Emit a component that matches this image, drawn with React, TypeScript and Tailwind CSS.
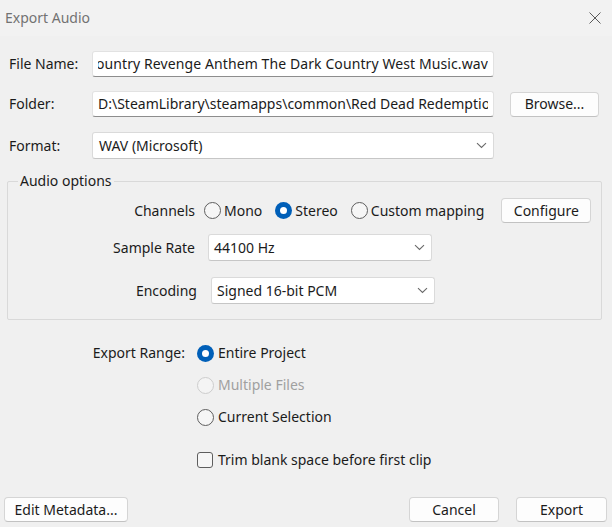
import React from "react";

function Chevron() {
  return (
    <svg width="11" height="7" viewBox="0 0 11 7" className="shrink-0">
      <path d="M1 1.2 L5.5 5.5 L10 1.2" fill="none" stroke="#6a6a6a" strokeWidth="1.1" />
    </svg>
  );
}

function Radio({ checked, disabled }: { checked?: boolean; disabled?: boolean }) {
  if (checked) {
    return (
      <span className="w-[17px] h-[17px] rounded-full bg-[#005fb8] flex items-center justify-center shrink-0">
        <span className="w-[7px] h-[7px] rounded-full bg-white" />
      </span>
    );
  }
  if (disabled) {
    return <span className="w-[17px] h-[17px] rounded-full border border-[#cdcdcd] bg-[#f4f4f4] shrink-0" />;
  }
  return <span className="w-[17px] h-[17px] rounded-full border border-[#5e5e5e] bg-[#f6f6f6] shrink-0" />;
}

function Button({ label, className }: { label: string; className: string }) {
  return (
    <div
      className={
        "h-[25px] flex items-center justify-center bg-[#fdfdfd] border border-[#d5d5d5] border-b-[#c2c2c2] rounded-[4px] text-[#1b1b1b] " +
        className
      }
    >
      {label}
    </div>
  );
}

export default function App() {
  return (
    <div className="w-[612px] h-[527px] bg-[#f0f0f0] font-['Noto_Sans',sans-serif] text-[14px] leading-[20px] text-[#1b1b1b] overflow-hidden flex flex-col">
      {/* Title bar */}
      <div className="h-[36px] shrink-0 flex items-center justify-between pl-[5px] pr-[11px] bg-[#f2f2f2]">
        <span className="text-[#727272] text-[14px]">Export Audio</span>
        <svg width="12" height="12" viewBox="0 0 12 12">
          <path d="M0.5 0.5 L11.5 11.5 M11.5 0.5 L0.5 11.5" stroke="#5a5a5a" strokeWidth="1" />
        </svg>
      </div>

      {/* File Name */}
      <div className="flex items-center h-[26px] mt-[15px] pl-[9px]">
        <span className="w-[83px] shrink-0">File Name:</span>
        <div className="w-[402px] h-[26px] bg-white border border-[#e2e2e2] border-b-[#8d8d8d] rounded-[3px] px-[5px] flex items-center">
          <div className="flex-1 overflow-hidden flex justify-end">
            <span className="whitespace-nowrap tracking-[0.1px]">Country Revenge Anthem The Dark Country West Music.wav</span>
          </div>
        </div>
      </div>

      {/* Folder */}
      <div className="flex items-center h-[26px] mt-[14px] pl-[9px]">
        <span className="w-[83px] shrink-0">Folder:</span>
        <div className="w-[402px] h-[26px] bg-white border border-[#e2e2e2] border-b-[#8d8d8d] rounded-[3px] px-[5px] flex items-center">
          <div className="flex-1 overflow-hidden flex justify-start">
            <span className="whitespace-nowrap">D:\SteamLibrary\steamapps\common\Red Dead Redemption 2</span>
          </div>
        </div>
        <Button label="Browse..." className="ml-[16px] w-[89px]" />
      </div>

      {/* Format */}
      <div className="flex items-center h-[27px] mt-[15px] pl-[9px]">
        <span className="w-[83px] shrink-0">Format:</span>
        <div className="w-[402px] h-[27px] bg-white border border-[#dadada] border-b-[#c6c6c6] rounded-[3px] pl-[6px] pr-[6px] flex items-center justify-between">
          <span>WAV (Microsoft)</span>
          <Chevron />
        </div>
      </div>

      {/* Audio options group */}
      <div className="relative ml-[7px] mt-[22px] w-[595px] h-[139px] border border-[#d9d9d9] rounded-[2px] flex flex-col">
        <span className="absolute -top-[11px] left-[10px] px-[2px] bg-[#f0f0f0] leading-[20px]">Audio options</span>

        {/* Channels */}
        <div className="flex items-center h-[25px] mt-[16px]">
          <span className="w-[187px] text-right shrink-0">Channels</span>
          <div className="flex items-center ml-[9px]">
            <Radio />
            <span className="ml-[3px]">Mono</span>
          </div>
          <div className="flex items-center ml-[13px]">
            <Radio checked />
            <span className="ml-[3px]">Stereo</span>
          </div>
          <div className="flex items-center ml-[13px]">
            <Radio />
            <span className="ml-[3px]">Custom mapping</span>
          </div>
          <Button label="Configure" className="ml-[17px] w-[90px]" />
        </div>

        {/* Sample Rate */}
        <div className="flex items-center h-[27px] mt-[11px]">
          <span className="w-[187px] text-right shrink-0">Sample Rate</span>
          <div className="ml-[13px] w-[224px] h-[27px] bg-white border border-[#dadada] border-b-[#c6c6c6] rounded-[3px] pl-[5px] pr-[6px] flex items-center justify-between">
            <span>44100 Hz</span>
            <Chevron />
          </div>
        </div>

        {/* Encoding */}
        <div className="flex items-center h-[27px] mt-[16px]">
          <span className="w-[189px] text-right shrink-0">Encoding</span>
          <div className="ml-[14px] w-[224px] h-[27px] bg-white border border-[#dadada] border-b-[#c6c6c6] rounded-[3px] pl-[5px] pr-[6px] flex items-center justify-between">
            <span>Signed 16-bit PCM</span>
            <Chevron />
          </div>
        </div>
      </div>

      {/* Export Range */}
      <div className="flex ml-[7px] mt-[23px]">
        <span className="w-[178px] text-right shrink-0 h-[20px] leading-[20px]">Export Range:</span>
        <div className="ml-[12px] flex flex-col">
          <div className="flex items-center h-[20px]">
            <Radio checked />
            <span className="ml-[4px]">Entire Project</span>
          </div>
          <div className="flex items-center h-[20px] mt-[12px]">
            <Radio disabled />
            <span className="ml-[4px] text-[#a0a0a0]">Multiple Files</span>
          </div>
          <div className="flex items-center h-[20px] mt-[12px]">
            <Radio />
            <span className="ml-[4px]">Current Selection</span>
          </div>
          <div className="flex items-center h-[20px] mt-[23px]">
            <span className="w-[16px] h-[16px] rounded-[3px] border border-[#5e5e5e] bg-[#f6f6f6] shrink-0" />
            <span className="ml-[5px]">Trim blank space before first clip</span>
          </div>
        </div>
      </div>

      {/* Bottom buttons */}
      <div className="mt-auto mb-[5px] flex items-center">
        <Button label="Edit Metadata..." className="ml-[4px] w-[124px]" />
        <Button label="Cancel" className="ml-auto w-[90px]" />
        <Button label="Export" className="ml-[17px] mr-[5px] w-[91px]" />
      </div>
    </div>
  );
}
